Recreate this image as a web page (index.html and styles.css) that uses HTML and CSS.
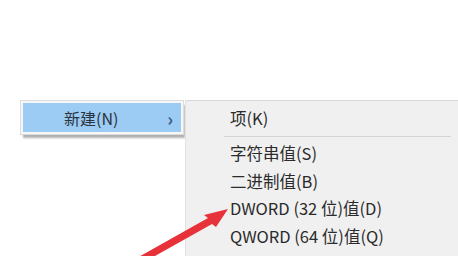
FILE: index.html
```html
<!DOCTYPE html>
<html>
<head>
<meta charset="utf-8">
<link rel="stylesheet" href="styles.css">
</head>
<body>
<div class="stage">
  <div class="menu-left">
    <div class="item-active">
      <span class="label">新建(N)</span>
      <span class="chev">›</span>
    </div>
  </div>
  <div class="menu-right">
    <div class="row first">项(K)</div>
    <div class="sep"></div>
    <div class="row">字符串值(S)</div>
    <div class="row">二进制值(B)</div>
    <div class="row">DWORD (32 位)值(D)</div>
    <div class="row">QWORD (64 位)值(Q)</div>
  </div>
</div>
<svg class="arrow" width="458" height="256" viewBox="0 0 458 256">
  <polygon points="135,259 208,218 204,215 228,209 216,227 212,224 139,265" fill="#e8323a"/>
</svg>
</body>
</html>
```
FILE: styles.css
```css
html, body {
  margin: 0;
  padding: 0;
  background: #ffffff;
  width: 458px;
  height: 256px;
  overflow: hidden;
  font-family: "Noto Sans CJK SC", "Noto Sans", sans-serif;
  color: #2b2b2b;
}
.stage {
  display: flex;
  align-items: flex-start;
  padding-top: 100px;
}
.menu-left {
  margin-left: 20px;
  width: 158px;
  padding: 2px;
  border: 1px solid #dcdcdc;
  background: #f7f7f7;
  box-shadow: 2px 4px 2px -1px #b0b0b0;
}
.item-active {
  display: flex;
  align-items: center;
  height: 29px;
  background: #9ccbf3;
  padding: 0 8px 0 41px;
  font-size: 16px;
  color: #2a3440;
}
.label { flex: 1; }
.chev {
  font-size: 18px;
  font-weight: bold;
  color: #3d5d80;
}
.menu-right {
  flex: 1;
  height: 155px;
  margin-left: 1px;
  background: #f0f0f0;
  border-top: 1px solid #d8d8d8;
  border-left: 1px solid #e2e2e2;
  padding-top: 2px;
  font-size: 16.5px;
}
.row {
  height: 27.5px;
  line-height: 27.5px;
  padding-left: 44px;
}
.row.first {
  height: 30px;
  line-height: 30px;
}
.sep {
  height: 1px;
  background: #d4d4d4;
  margin: 3px 7px 3px 38px;
}
.arrow {
  position: absolute;
  left: 0;
  top: 0;
}
```
